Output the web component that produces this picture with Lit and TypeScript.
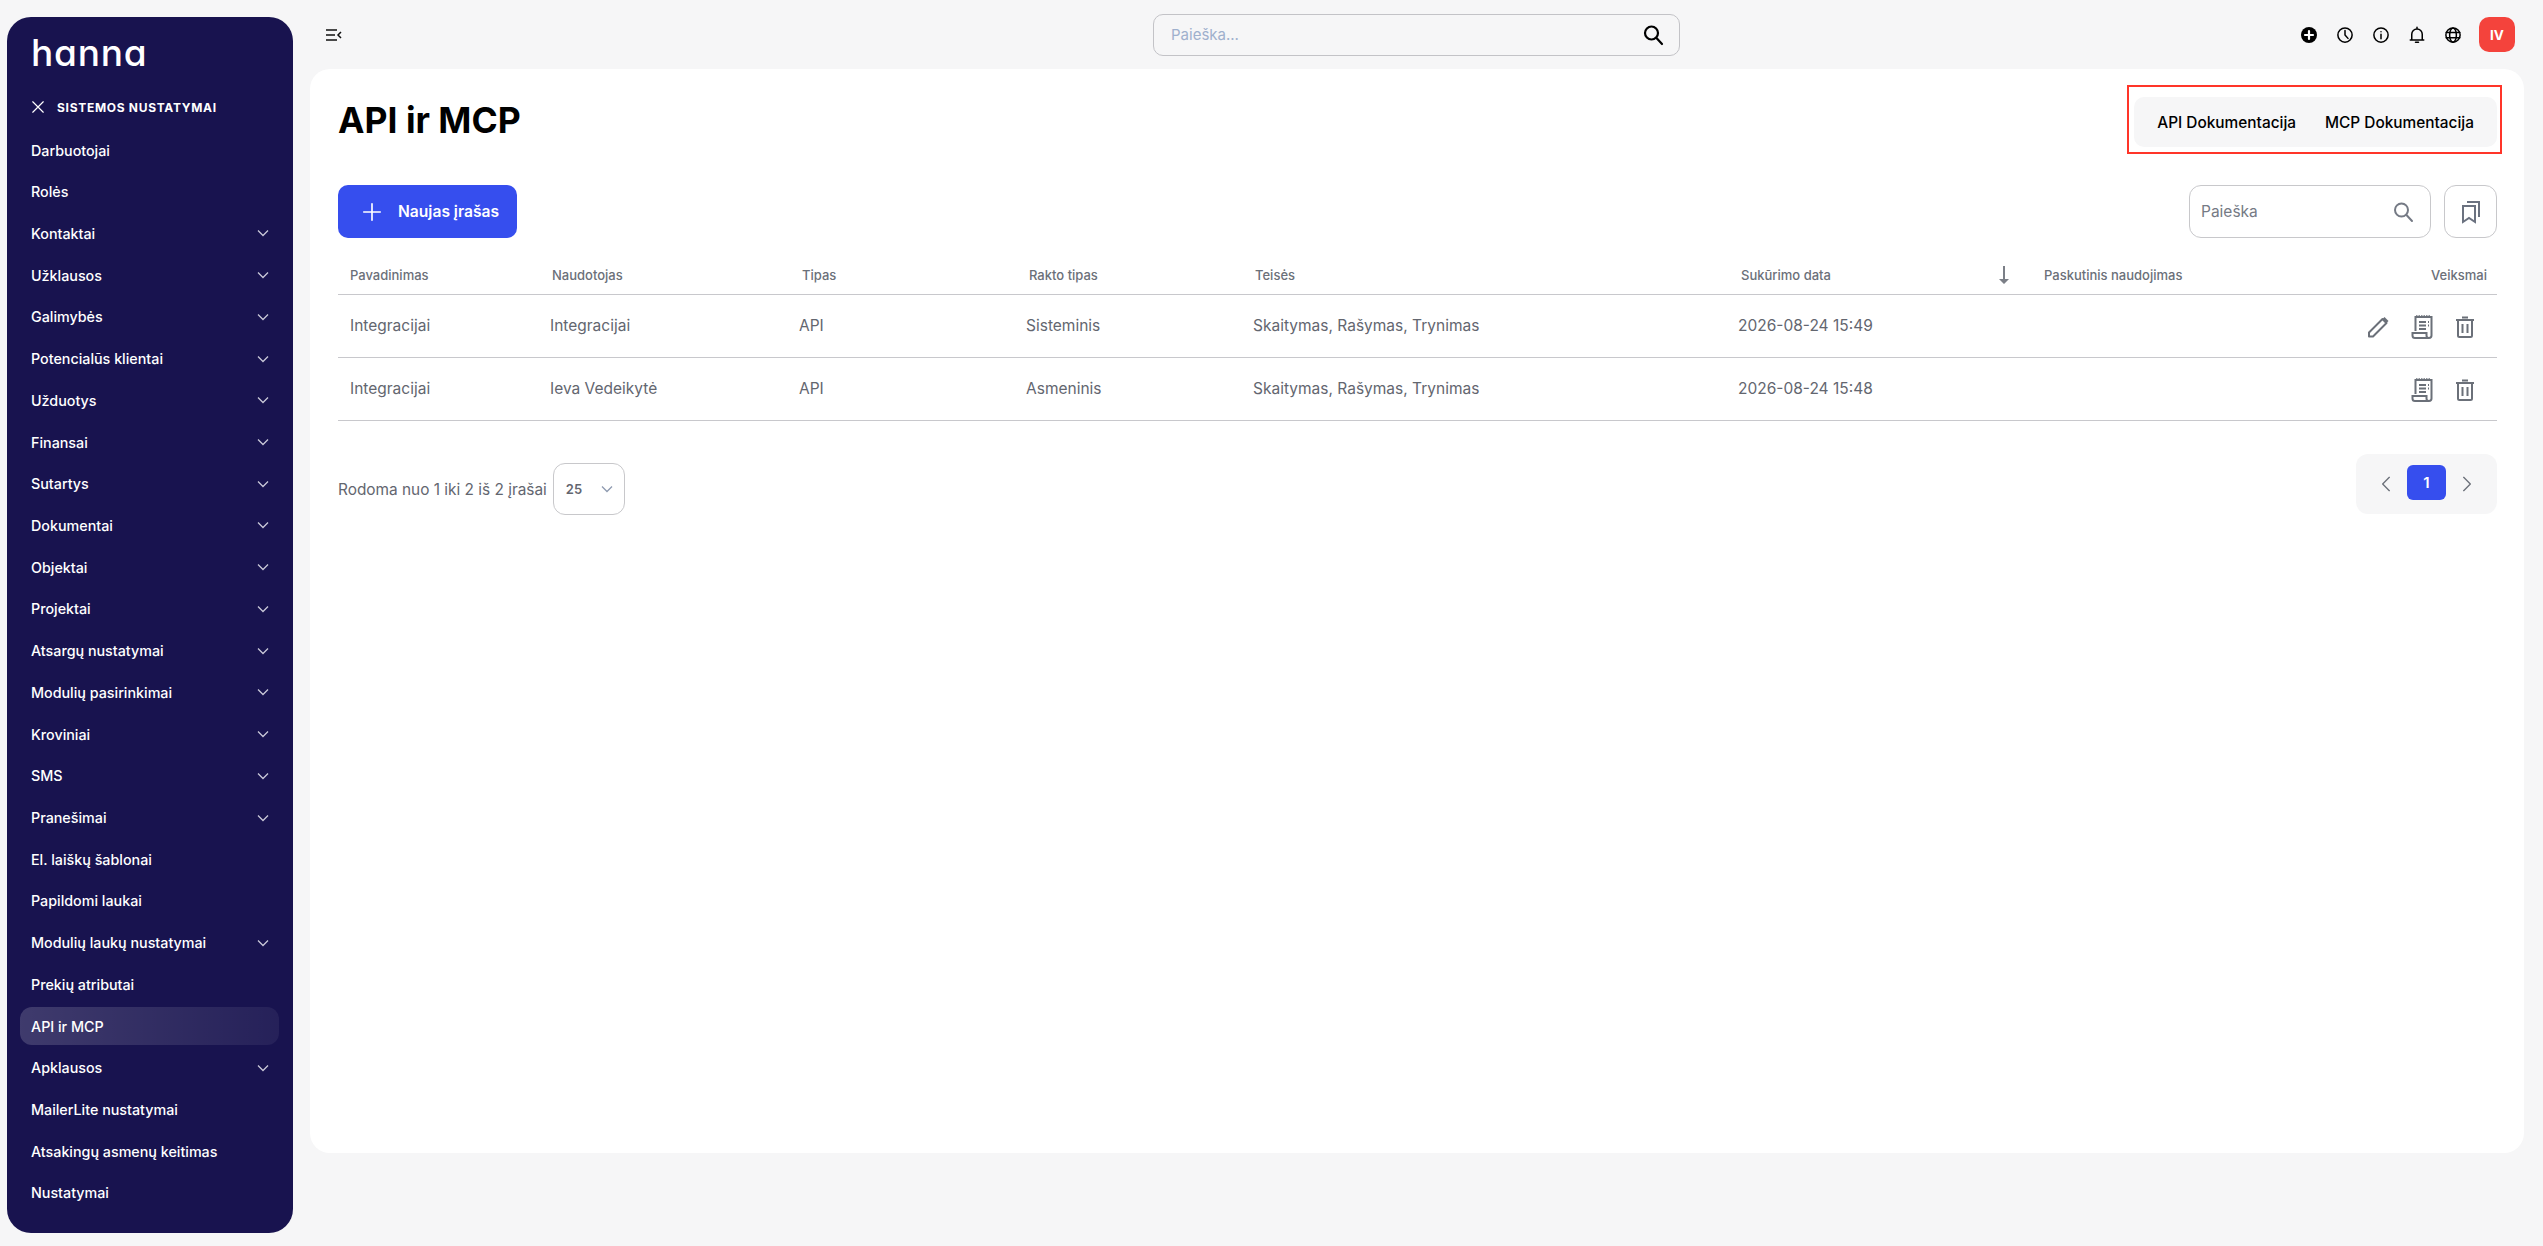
import { LitElement, css, html, svg } from 'lit';
import { customElement } from 'lit/decorators.js';

interface NavItem {
  label: string;
  sub?: boolean;
  active?: boolean;
}

const NAV: NavItem[] = [
  { label: 'Darbuotojai' },
  { label: 'Rolės' },
  { label: 'Kontaktai', sub: true },
  { label: 'Užklausos', sub: true },
  { label: 'Galimybės', sub: true },
  { label: 'Potencialūs klientai', sub: true },
  { label: 'Užduotys', sub: true },
  { label: 'Finansai', sub: true },
  { label: 'Sutartys', sub: true },
  { label: 'Dokumentai', sub: true },
  { label: 'Objektai', sub: true },
  { label: 'Projektai', sub: true },
  { label: 'Atsargų nustatymai', sub: true },
  { label: 'Modulių pasirinkimai', sub: true },
  { label: 'Kroviniai', sub: true },
  { label: 'SMS', sub: true },
  { label: 'Pranešimai', sub: true },
  { label: 'El. laiškų šablonai' },
  { label: 'Papildomi laukai' },
  { label: 'Modulių laukų nustatymai', sub: true },
  { label: 'Prekių atributai' },
  { label: 'API ir MCP', active: true },
  { label: 'Apklausos', sub: true },
  { label: 'MailerLite nustatymai' },
  { label: 'Atsakingų asmenų keitimas' },
  { label: 'Nustatymai' },
];

// header text sits a little right of the cell text in some columns
const COLUMNS = [
  { label: 'Pavadinimas', offset: 0 },
  { label: 'Naudotojas', offset: 2 },
  { label: 'Tipas', offset: 3 },
  { label: 'Rakto tipas', offset: 3 },
  { label: 'Teisės', offset: 2 },
];

const ROWS = [
  { name: 'Integracijai', user: 'Integracijai', type: 'API', key: 'Sisteminis', date: '2026-08-24 15:49', edit: true },
  { name: 'Integracijai', user: 'Ieva Vedeikytė', type: 'API', key: 'Asmeninis', date: '2026-08-24 15:48', edit: false },
];

const icon = (size: number, body: unknown, sw = 2) => html`
  <svg width=${size} height=${size} viewBox="0 0 24 24" fill="none" stroke="currentColor"
    stroke-width=${sw} stroke-linecap="round" stroke-linejoin="round">${body}</svg>
`;

const chevronDown = html`
  <svg width="12" height="8" viewBox="0 0 12 8" fill="none" stroke="currentColor" stroke-width="1.3">
    <path d="M1 1.5l5 5 5-5"/>
  </svg>
`;

const sortArrow = html`
  <svg width="12" height="18" viewBox="0 0 12 18">
    <path d="M5 0h2v13h4l-5 5-5-5h4z" fill="currentColor"/>
  </svg>
`;

const pencilIcon = html`
  <svg width="22" height="22" viewBox="0 0 22 22" fill="none" stroke="currentColor" stroke-width="2" stroke-linejoin="round">
    <path d="M2 20.5v-4L15.5 3l4 4L6 20.5z"/>
    <path d="M15 3.5L17.5 1l4 4L19 7.5z" fill="currentColor" stroke="none"/>
  </svg>
`;

const receiptIcon = html`
  <svg width="22" height="24" viewBox="0 0 22 24" fill="none" stroke="currentColor" stroke-width="2">
    <path d="M4.5 16V2h16v18.5a2.5 2.5 0 0 1-5 0V18H1.5v2.5A2.5 2.5 0 0 0 4 23h14"/>
    <path d="M8 7h7M8 10.5h7M8 14h7M17 7h1M17 10.5h1"/>
    <path d="M5 1h15" stroke-width="1.5" stroke-dasharray="1.5 1"/>
  </svg>
`;

const trashIcon = html`
  <svg width="20" height="22" viewBox="0 0 20 22" fill="none" stroke="currentColor" stroke-width="2">
    <path d="M1 4h18M7 1.5h6M3 4v15.5a1.500 1.500 0 0 0 1.500 1.500h11a1.500 1.500 0 0 0 1.500-1.500V4"/>
    <path d="M7.5 8v9M12.5 8v9"/>
  </svg>
`;

@customElement('app-root')
export class AppRoot extends LitElement {
  static styles = css`
    :host {
      display: flex;
      height: 1246px;
      background: #f6f6f7;
      font-family: Inter, 'Liberation Sans', sans-serif;
      color: #63666f;
      overflow: hidden;
    }

    svg {
      display: block;
      flex: none;
    }

    .sidebar {
      flex: none;
      box-sizing: border-box;
      width: 286px;
      height: 1216px;
      margin: 17px 17px 0 7px;
      padding: 0 14px 0 13px;
      border-radius: 24px;
      background: #18134f;
      color: #fff;
    }

    .logo {
      height: 48px;
      padding: 12px 0 0 11px;
      font-size: 37px;
      line-height: 48px;
      font-weight: 500;
      letter-spacing: 0.8px;
      font-feature-settings: 'cv11' 1;
    }

    .section {
      display: flex;
      align-items: center;
      gap: 12px;
      height: 20px;
      margin: 20px 0 14px;
      padding-left: 11px;
      font-size: 12px;
      font-weight: 700;
      letter-spacing: 0.7px;
      text-transform: uppercase;
    }

    .nav {
      display: flex;
      flex-direction: column;
      gap: 3.72px;
    }

    .nav-row {
      display: flex;
      align-items: center;
      justify-content: space-between;
      height: 38px;
      padding: 0 10px 0 11px;
      border-radius: 12px;
      font-size: 14.3px;
      font-weight: 500;
    }

    .nav-row svg {
      color: #c9c8d8;
    }

    .nav-row.active {
      background: linear-gradient(90deg, rgba(255, 255, 255, 0.17), rgba(255, 255, 255, 0.06));
    }

    .content {
      flex: none;
      width: 2214px;
    }

    .topbar {
      display: flex;
      align-items: center;
      box-sizing: border-box;
      height: 69px;
      padding: 0 9px 0 16px;
      color: #111;
    }

    .global-search {
      display: flex;
      align-items: center;
      justify-content: space-between;
      box-sizing: border-box;
      width: 527px;
      height: 42px;
      margin-left: 811px;
      padding: 0 14px 0 17px;
      border: 1px solid #c3c3c7;
      border-radius: 10px;
      color: #000;
    }

    .global-search span {
      color: #9fb0cd;
      font-size: 15px;
    }

    .top-actions {
      display: flex;
      align-items: center;
      gap: 18px;
      margin-left: auto;
      color: #000;
    }

    .avatar {
      display: flex;
      align-items: center;
      justify-content: center;
      width: 36px;
      height: 35px;
      margin-left: -1px;
      border-radius: 10px;
      background: #f4433c;
      color: #fff;
      font-size: 13.5px;
      font-weight: 700;
    }

    .card {
      position: relative;
      box-sizing: border-box;
      height: 1084px;
      padding: 28px 27px 0 28px;
      border-radius: 20px;
      background: #fff;
    }

    .title-row {
      display: flex;
      align-items: center;
      justify-content: space-between;
      height: 50px;
    }

    h1 {
      margin: 0 0 4px;
      color: #000;
      font-size: 35.5px;
      font-weight: 700;
    }

    .docs {
      display: flex;
      align-items: center;
      gap: 29px;
      height: 50px;
      padding: 0 23px;
      border-radius: 10px;
      background: #f6f6f7;
      color: #000;
      font-size: 15.4px;
      font-weight: 500;
    }

    .callout {
      position: absolute;
      top: 16px;
      right: 22px;
      box-sizing: border-box;
      width: 375px;
      height: 69px;
      border: 2px solid #ff3529;
    }

    .toolbar {
      display: flex;
      align-items: center;
      gap: 13px;
      height: 53px;
      margin-top: 38px;
    }

    .add {
      display: flex;
      align-items: center;
      gap: 15px;
      box-sizing: border-box;
      width: 179px;
      height: 53px;
      margin-right: auto;
      padding-left: 23px;
      border-radius: 10px;
      background: #364eee;
      color: #fff;
      font-size: 15.6px;
      font-weight: 600;
    }

    .search {
      display: flex;
      align-items: center;
      justify-content: space-between;
      box-sizing: border-box;
      width: 242px;
      height: 53px;
      padding: 0 15px 0 11px;
      border: 1px solid #c8c8cb;
      border-radius: 12px;
      font-size: 15.5px;
      color: #757a85;
    }

    .bookmark {
      display: flex;
      align-items: center;
      justify-content: center;
      box-sizing: border-box;
      width: 53px;
      height: 53px;
      border: 1px solid #c8c8cb;
      border-radius: 12px;
      color: #6b7280;
    }

    .grid {
      display: grid;
      grid-template-columns: 200px 249px 227px 227px 485px 306px 1fr 110px;
      align-items: center;
      border-bottom: 1px solid #c8c8cc;
    }

    .head {
      height: 57px;
      padding-top: 18px;
      box-sizing: border-box;
      font-size: 13px;
      font-weight: 500;
      color: #6b7079;
    }

    .row {
      height: 63px;
      padding-bottom: 2px;
      box-sizing: border-box;
      font-size: 15.5px;
    }

    .cell {
      padding-left: 12px;
      white-space: nowrap;
    }

    .sorted {
      display: flex;
      align-items: center;
      justify-content: space-between;
      padding-left: 15px;
      padding-right: 22px;
    }

    .sorted svg {
      color: #7b7f87;
    }

    .end {
      padding-right: 10px;
      text-align: right;
    }

    .row-actions {
      display: flex;
      align-items: center;
      justify-content: flex-end;
      gap: 22px;
      padding-right: 22px;
      padding-top: 3px;
      color: #6b7079;
    }

    .footer {
      display: flex;
      justify-content: space-between;
      margin-top: 33px;
      height: 60px;
      font-size: 15.4px;
    }

    .count {
      display: flex;
      align-items: center;
      align-self: flex-start;
      gap: 6px;
      padding-top: 9px;
    }

    .select {
      display: flex;
      align-items: center;
      justify-content: space-between;
      box-sizing: border-box;
      width: 72px;
      height: 52px;
      padding: 0 11px 0 12px;
      border: 1px solid #c8c8cb;
      border-radius: 12px;
      font-size: 13px;
      font-weight: 600;
    }

    .select svg {
      color: #8e9ab0;
    }

    .pager {
      display: flex;
      align-items: center;
      gap: 13px;
      box-sizing: border-box;
      width: 141px;
      height: 60px;
      padding-left: 22px;
      border-radius: 12px;
      background: #f6f6f7;
      color: #6b7079;
    }

    .page {
      display: flex;
      align-items: center;
      justify-content: center;
      width: 39px;
      height: 35px;
      margin-bottom: 3px;
      border-radius: 6px;
      background: #364eee;
      color: #fff;
      font-size: 15px;
      font-weight: 600;
    }
  `;

  private renderNav() {
    return NAV.map(
      (item) => html`
        <div class="nav-row ${item.active ? 'active' : ''}">
          <span>${item.label}</span>
          ${item.sub ? chevronDown : ''}
        </div>
      `
    );
  }

  private renderTopActions() {
    return html`
      <div class="top-actions">
        <svg width="18" height="18" viewBox="0 0 18 18">
          <circle cx="9" cy="9" r="8" fill="currentColor"/>
          <path d="M9 5v8M5 9h8" stroke="#fff" stroke-width="2.2" stroke-linecap="round"/>
        </svg>
        ${icon(18, svg`<circle cx="12" cy="12" r="9.5"/><path d="M12 6v6l4 4.5"/>`, 2)}
        ${icon(18, svg`<circle cx="12" cy="12" r="9.5"/><path d="M12 11v6M12 7.5v.2"/>`, 2)}
        ${icon(18, svg`<path d="M5 18V11a7 7 0 0 1 14 0v7M3 18.5h18M12 1.5V4M10 21.5h4"/>`, 2)}
        ${icon(18, svg`<circle cx="12" cy="12" r="9.5"/><ellipse cx="12" cy="12" rx="4.5" ry="9.5"/><path d="M3 8.5h18M3 15.5h18"/>`, 2)}
        <div class="avatar">IV</div>
      </div>
    `;
  }

  private renderTable() {
    return html`
      <div class="grid head">
        ${COLUMNS.map(
          (col) => html`<div class="cell" style="padding-left:${12 + col.offset}px">${col.label}</div>`
        )}
        <div class="sorted">
          <span>Sukūrimo data</span>
          ${sortArrow}
        </div>
        <div class="cell">Paskutinis naudojimas</div>
        <div class="cell end">Veiksmai</div>
      </div>
      ${ROWS.map(
        (row) => html`
          <div class="grid row">
            <div class="cell">${row.name}</div>
            <div class="cell">${row.user}</div>
            <div class="cell">${row.type}</div>
            <div class="cell">${row.key}</div>
            <div class="cell">Skaitymas, Rašymas, Trynimas</div>
            <div class="cell">${row.date}</div>
            <div></div>
            <div class="row-actions">${row.edit ? pencilIcon : ''} ${receiptIcon} ${trashIcon}</div>
          </div>
        `
      )}
    `;
  }

  render() {
    return html`
      <aside class="sidebar">
        <div class="logo">hanna</div>
        <div class="section">
          ${icon(14, svg`<path d="M3 3l18 18M21 3L3 21"/>`, 2)}
          <span>Sistemos nustatymai</span>
        </div>
        <nav class="nav">${this.renderNav()}</nav>
      </aside>
      <main class="content">
        <header class="topbar">
          <svg width="16" height="12" viewBox="0 0 16 12" fill="none" stroke="currentColor" stroke-width="1.5">
            <path d="M0 1h11M0 6h9M0 11h11M15 3l-3 3 3 3"/>
          </svg>
          <div class="global-search">
            <span>Paieška...</span>
            ${icon(24, svg`<circle cx="10.5" cy="10" r="6.5"/><path d="M15.5 15l5.5 6"/>`, 2.2)}
          </div>
          ${this.renderTopActions()}
        </header>
        <section class="card">
          <div class="title-row">
            <h1>API ir MCP</h1>
            <div class="docs"><span>API Dokumentacija</span><span>MCP Dokumentacija</span></div>
          </div>
          <div class="callout"></div>
          <div class="toolbar">
            <div class="add">
              ${icon(22, svg`<path d="M12 3v18M3 12h18"/>`, 1.8)}
              <span>Naujas įrašas</span>
            </div>
            <div class="search">
              <span>Paieška</span>
              ${icon(24, svg`<circle cx="10.5" cy="10" r="6.5"/><path d="M15.5 15l5.5 6"/>`, 2)}
            </div>
            <div class="bookmark">
              <svg width="20" height="24" viewBox="0 0 20 24" fill="none" stroke="currentColor" stroke-width="2">
                <path d="M2 6h12v16l-6-4-6 4z"/>
                <path d="M6 2h12v15"/>
              </svg>
            </div>
          </div>
          ${this.renderTable()}
          <div class="footer">
            <div class="count">
              <span>Rodoma nuo 1 iki 2 iš 2 įrašai</span>
              <div class="select"><span>25</span>${chevronDown}</div>
            </div>
            <div class="pager">
              ${icon(16, svg`<path d="M17 2L7 12l10 10"/>`, 2)}
              <div class="page">1</div>
              ${icon(16, svg`<path d="M7 2l10 10L7 22"/>`, 2)}
            </div>
          </div>
        </section>
      </main>
    `;
  }
}

declare global {
  interface HTMLElementTagNameMap {
    'app-root': AppRoot;
  }
}
